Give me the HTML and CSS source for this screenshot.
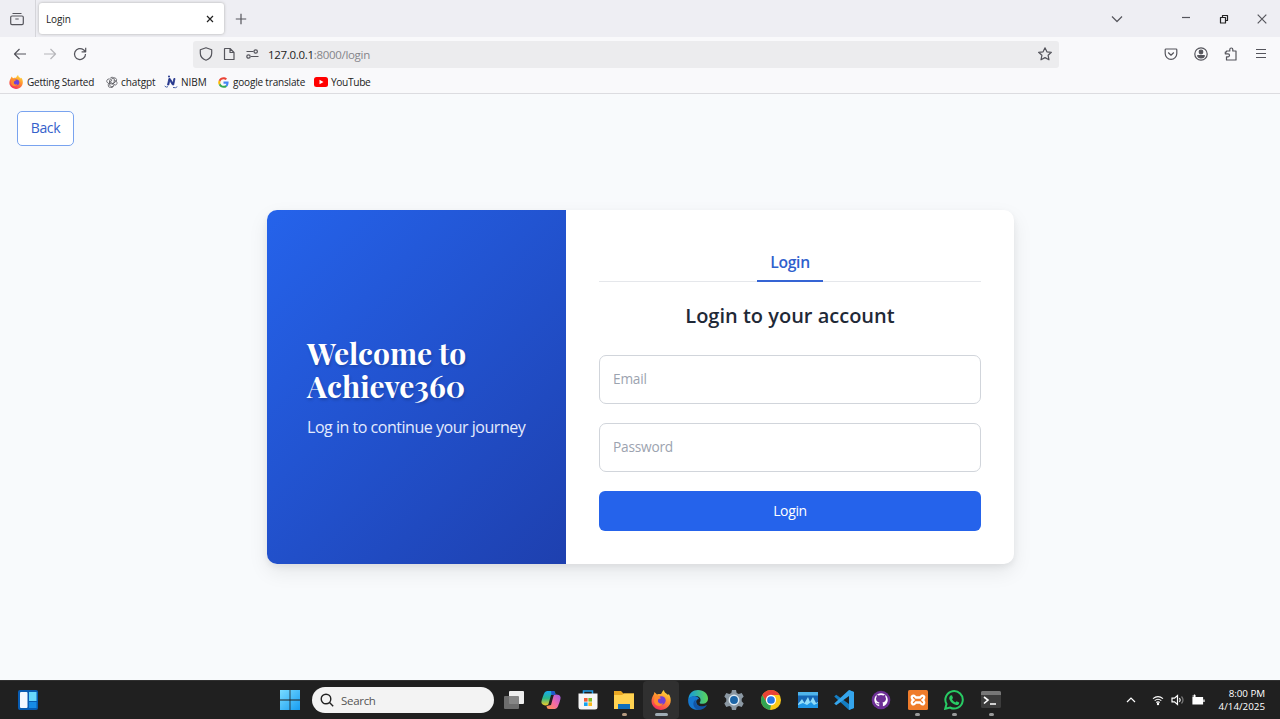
FILE: index.html
```html
<!DOCTYPE html>
<html lang="en">
<head>
<meta charset="utf-8">
<title>Login</title>
<link rel="stylesheet" href="styles.css">
</head>
<body>
<div class="tabs">
  <div class="firefox-view"><svg width="16" height="16" viewBox="0 0 16 16" class="line"><path d="M3.500 2.500h9M3 5h10a1.300 1.300 0 0 1 1.300 1.300v6a1.300 1.300 0 0 1-1.300 1.300H3a1.300 1.300 0 0 1-1.300-1.300v-6A1.300 1.300 0 0 1 3 5zM6.300 8h3.400"/></svg></div>
  <div class="tab"><span class="tab-title">Login</span><svg width="10" height="10" viewBox="0 0 10 10" class="line dark"><path d="M2 2l6 6m0-6l-6 6"/></svg></div>
  <svg class="line plus" width="12" height="12" viewBox="0 0 12 12"><path d="M6 .8v10.400M.8 6h10.400"/></svg>
  <svg class="line chevron" width="12" height="12" viewBox="0 0 12 12"><path d="M1 3.500l5 5 5-5"/></svg>
  <svg class="line minimize" width="10" height="10" viewBox="0 0 10 10"><path d="M1 3.500h8"/></svg>
  <svg class="line dark restore" width="10" height="10" viewBox="0 0 10 10"><path d="M1.500 3.500h5V9h-5zM3.500 3V1.500h5v5H7"/></svg>
  <svg class="line close" width="10" height="10" viewBox="0 0 10 10"><path d="M.7.7l8.600 8.600m0-8.600L.7 9.300"/></svg>
</div>
<div class="toolbar">
  <svg class="line back-arrow" width="14" height="14" viewBox="0 0 14 14"><path d="M13 7H1.500M6.500 2l-5 5 5 5"/></svg>
  <svg class="line forward-arrow" width="14" height="14" viewBox="0 0 14 14"><path d="M1 7h11.500M7.500 2l5 5-5 5"/></svg>
  <svg class="line reload" width="14" height="14" viewBox="0 0 14 14"><path d="M12.500 7A5.500 5.500 0 1 1 10.500 2.800l1.700 1.500M12.700.8v4H8.600"/></svg>
  <div class="address">
    <svg class="line" width="14" height="14" viewBox="0 0 14 14"><path d="M7 .8l5.700 2v3.400C12.700 9.500 10.300 12 7 13.200 3.700 12 1.300 9.500 1.300 6.200V2.800z"/></svg>
    <svg class="line page" width="12" height="14" viewBox="0 0 12 14"><path d="M2 1.500h5l4 4v7H1.500V2zM7 1.500v4h4"/></svg>
    <svg class="line" width="13" height="10" viewBox="0 0 13 10"><path d="M.5 2.500h7M5 7.500h7.500"/><circle cx="9.700" cy="2.500" r="1.700"/><circle cx="2.500" cy="7.500" r="1.700"/></svg>
    <span class="url"><b>127.0.0.1</b>:8000/login</span>
    <svg class="line star" width="14" height="14" viewBox="0 0 14 14"><path d="M7 .8l1.900 4 4.500.5-3.300 3 .9 4.500L7 10.600l-4 2.200.9-4.500-3.300-3 4.500-.5z"/></svg>
  </div>
  <div class="tools">
    <svg class="line" width="14" height="14" viewBox="0 0 14 14"><path d="M2 2h10a.8.8 0 0 1 .8.8v3.700a5.800 5.800 0 0 1-11.600 0V2.800A.8.8 0 0 1 2 2zM4.200 5.500L7 8.200l2.800-2.700"/></svg>
    <svg class="line" width="14" height="14" viewBox="0 0 14 14"><circle cx="7" cy="7" r="6.200"/><circle cx="7" cy="5" r="1.800" class="solid"/><path class="solid" d="M3.700 8.500h6.600c0 3.200-6.600 3.200-6.600 0z"/></svg>
    <svg class="line" width="14" height="14" viewBox="0 0 14 14"><path d="M2.500 5V4h3.300V2.500a1.500 1.500 0 0 1 3 0V4H12v9H2.500V9.800H4a1.500 1.500 0 0 0 0-3H1.300V5z"/></svg>
    <svg class="line" width="14" height="14" viewBox="0 0 14 14"><path d="M2 2.500h10M2 6.500h10M2 10.500h10"/></svg>
  </div>
</div>
<div class="bookmarks">
  <svg width="14" height="14" viewBox="0 0 20 20"><use href="#firefox"/></svg><span class="bm started">Getting Started</span>
  <svg width="12" height="12" viewBox="0 0 12 12" class="line knot"><path d="M4 2.700a2.200 2.200 0 0 1 4.200.2v4L6 8.200 3.700 6.900V4.200L7 2.300a2.200 2.200 0 0 1 3.300 2.800L6 8.200M8.200 4l2 1.200a2.200 2.200 0 0 1-1 3.900L5 6.500M8 9.200a2.200 2.200 0 0 1-4.200 0V5M7.500 9.400a2.200 2.200 0 0 1-5.300-.8L6 4M3.700 8L1.800 7A2.200 2.200 0 0 1 3.500 3"/></svg><span class="bm chatgpt">chatgpt</span>
  <svg width="14" height="14" viewBox="0 0 14 14"><path d="M3.500 10l1.400-6.500h1.200l2.800 4.500L9.900 3.500H11L9.700 10H8.500L5.700 5.600 4.800 10z" fill="#23358c" stroke="#23358c" stroke-width=".8"/><path d="M.7 11q1.500 2 3.300.6M9 12.500q3 .8 4.300-.8" fill="none" stroke="#4861a8"/><circle cx="5" cy="1.500" r="1" fill="#23358c"/></svg><span class="bm nibm">NIBM</span>
  <svg width="11" height="11" viewBox="0 0 24 24" class="g-logo"><path fill="#4285f4" d="M23 10H12v4.500h6.300a5.500 5.500 0 0 1-2.300 3.700l3.700 2.800C22 18.900 23.600 15 23 10z"/><path fill="#34a853" d="M19.700 21C13.800 26 4.500 23.700 1.700 17l3.700-2.900c1.600 4.900 6.700 6.600 10.600 4.100z"/><path fill="#fbbc05" d="M1.700 17a11.300 11.300 0 0 1 0-10l3.700 2.900a7 7 0 0 0 0 4.200z"/><path fill="#ea4335" d="M1.700 7C5-.2 14-2 19.700 3.600l-3.200 3.200C12.700 3.400 7 5 5.400 9.900z"/></svg><span class="bm translate">google translate</span>
  <svg width="14" height="10" viewBox="0 0 14 10"><rect width="14" height="10" rx="2.500" fill="#f00"/><path d="M5.500 2.700v4.600l4-2.300z" fill="#fff"/></svg><span class="bm youtube">YouTube</span>
</div>
<main class="page-body">
  <a class="back">Back</a>
  <section class="card">
    <div class="hero">
      <h1>Welcome to<br>Achieve360</h1>
      <p>Log in to continue your journey</p>
    </div>
    <form class="panel">
      <div class="switcher"><span class="active">Login</span></div>
      <h2>Login to your account</h2>
      <div class="field email">Email</div>
      <div class="field password">Password</div>
      <div class="submit">Login</div>
    </form>
  </section>
</main>
<footer class="taskbar">
  <svg class="widgets" width="20" height="20" viewBox="0 0 20 20"><rect width="20" height="20" rx="2" fill="#075bb1"/><rect x="2" y="2" width="7.500" height="16" rx="1" fill="#f2f8ff"/><rect x="11" y="2" width="7.500" height="9" fill="#67d7fb"/><rect x="11" y="12" width="7.500" height="6" fill="#168be6"/></svg>
  <svg class="start" width="20" height="20" viewBox="0 0 20 20"><defs><linearGradient id="win" x1="0" y1="0" x2="1" y2="1"><stop stop-color="#79dcff"/><stop offset="1" stop-color="#169cf1"/></linearGradient></defs><path fill="url(#win)" d="M0 0h9.600v9.600H0zM10.400 0H20v9.600h-9.600zM0 10.400h9.600V20H0zM10.400 10.400H20V20h-9.600z"/></svg>
  <div class="search"><svg width="14" height="14" viewBox="0 0 14 14"><circle cx="6" cy="6" r="4.800"/><path d="M9.500 9.500l3.700 3.700"/></svg><span>Search</span></div>
  <div class="apps">
    <div class="app"><svg width="20" height="20" viewBox="0 0 20 20"><rect x="5" y="1" width="15" height="13" rx="1" fill="#eee"/><rect y="6" width="15" height="13" rx="1" fill="#777" opacity=".88"/></svg></div>
    <div class="app"><svg width="20" height="20" viewBox="0 0 20 20"><defs><linearGradient id="coa" x1="0" y1="0" x2="0" y2="1"><stop stop-color="#19a9ef"/><stop offset=".5" stop-color="#28b78b"/><stop offset="1" stop-color="#f4cc26"/></linearGradient><linearGradient id="cob" x1="1" y1="0" x2="0" y2="1"><stop stop-color="#9e59e8"/><stop offset=".5" stop-color="#f36aa7"/><stop offset="1" stop-color="#ff9745"/></linearGradient></defs><path fill="url(#coa)" d="M6 1h6c2 0 2 1 2.500 3L10 5 7.500 14c-.5 2-6 2-7-1C0 11 3 3 4 2z"/><path fill="url(#cob)" d="M14 19H8c-2 0-2-1-2.500-3L10 15l2.500-9c.5-2 6-2 7 1 .5 2-2.500 10-3.500 11z"/><path d="M10 1h3q1 1 1.500 4h-4z" fill="#2156cb"/></svg></div>
    <div class="app"><svg width="20" height="20" viewBox="0 0 20 20"><path d="M5.500 5V1h9v4" fill="none" stroke="#229ee8" stroke-width="1.500"/><path d="M.5 3.500h19V17a2.500 2.500 0 0 1-2.500 2.500H3A2.500 2.500 0 0 1 .5 17z" fill="#f6f6f6"/><path d="M6 8h3.600v3.600H6z" fill="#f15a35"/><path d="M10.400 8H14v3.600h-3.600z" fill="#7eb928"/><path d="M6 12.400h3.600V16H6z" fill="#15a3ee"/><path d="M10.400 12.400H14V16h-3.600z" fill="#fbb91b"/></svg></div>
    <div class="app"><svg width="22" height="20" viewBox="0 0 22 20"><path d="M1 1h7l2.500 2.500H21V19H1z" fill="#e9a723"/><path d="M1 5h8l2-1.500h10V19H1z" fill="#ffd251"/><path d="M5 14h12v5H5z" fill="#0d6fbd"/></svg><i class="dot warm"></i></div>
    <div class="app current"><svg width="20" height="20" viewBox="0 0 20 20"><defs><linearGradient id="fox" x1=".8" y1="0" x2=".3" y2="1"><stop stop-color="#ffe33b"/><stop offset=".45" stop-color="#ff9330"/><stop offset="1" stop-color="#f52b5d"/></linearGradient></defs><g id="firefox"><path fill="url(#fox)" d="M3 4l.4-2L6 4.500C8 3.700 9 4 10 4c1-1.500 1.500-3 3-4 0 3 3 3.500 4 5l.8-1c2 3 2.700 7 1 10.500C15 22 4 21.500 1 14-.2 10.500 1 7 3 4z"/><circle cx="10.500" cy="10.500" r="4.200" fill="#7140d6"/><path fill="#ff8b2f" d="M3.500 6.500C6 4.500 8 6 10 8.300L7.500 9C5.500 12 9 15 12 13c-2 5-9 3-9-2z"/></g></svg><i class="dot wide"></i></div>
    <div class="app"><svg width="20" height="20" viewBox="0 0 20 20"><defs><linearGradient id="edge" x1="0" y1="0" x2="1" y2="0"><stop stop-color="#1599df"/><stop offset="1" stop-color="#5bd657"/></linearGradient></defs><path fill="url(#edge)" d="M.3 9C1 3 5 0 10 0c6 0 10 4 10 8.500 0 4-3 5.500-6.500 5.300-2.300 0-2-1.200-1.200-2.300C14 7 8 3 .3 9z"/><path fill="#1677cf" d="M.2 9C3 5 10 5 11 9c-4 0-4 6 2 8l3 .5C10 22-.8 20 .2 9z"/><path fill="#1254a4" d="M8 9.500c-2 5 4 9 11 5.500-2 4-7 6-11 4-4-3-3-8 0-9.500z"/></svg></div>
    <div class="app"><svg width="20" height="20" viewBox="0 0 20 20"><path fill="#8b98a3" d="M8 0h4l.7 3 2 1 3-1 2 3.500-2 2.200v2.600l2 2.200-2 3.500-3-1-2 1-.7 3H8l-.7-3-2-1-3 1-2-3.500 2-2.200V8.700l-2-2.200L2.300 3l3 1 2-1z"/><circle cx="10" cy="10" r="4.700" fill="#1b65a7" stroke="#ddeaf3" stroke-width="1.500"/></svg></div>
    <div class="app"><svg width="20" height="20" viewBox="0 0 20 20"><circle cx="10" cy="10" r="10" fill="#fbc817"/><path fill="#e94335" d="M1.300 5C5-1.700 15-1.700 18.700 5H10v5l-4.300 2.500z"/><path fill="#31a451" d="M1.300 5l4.400 7.500L10 15l-1 5C1 19-2 11 1.300 5z"/><circle cx="10" cy="10" r="4.500" fill="#2878e5" stroke="#fff" stroke-width="1.300"/></svg></div>
    <div class="app"><svg width="20" height="16" viewBox="0 0 20 16"><rect width="20" height="16" fill="#1566b4"/><path d="M0 0h20v3.500H0z" fill="#4fb4ea"/><path d="M0 12l4-5 2.500 4L10 5l2 5 3-5 3 6 2-1v6H0z" fill="#8fdcfa"/><path d="M0 13l5-2 4 2 4-3 3 3 4-2v5H0z" fill="#1e96e6"/></svg></div>
    <div class="app"><svg width="20" height="20" viewBox="0 0 20 20"><path fill="#147dc2" d="M15 0l5 2v16l-5 2L.2 6.500l2-1.800L15 14z"/><path fill="#35a5ec" d="M15 0l5 2v16l-5 2V6L2.200 15.300l-2-1.800z"/></svg></div>
    <div class="app"><svg width="20" height="20" viewBox="0 0 20 20"><circle cx="10" cy="10" r="9.300" fill="#6c2f95"/><path fill="#fff" d="M8.200 16.300v-2c-2 .4-2.600-.8-3.200-1.600 1.500-.2 1.800 1.200 3.200.7l.3-1C6 12 5 10.500 5 8.500L5.700 6.500 5.600 4.500l2 .9q2.400-.6 4.800 0l2-.9-.1 2L15 8.500c0 2-1 3.500-3.500 3.900l.4 1.100v2.800A6.700 6.700 0 1 0 8.200 16.300z"/></svg></div>
    <div class="app"><svg width="20" height="20" viewBox="0 0 20 20"><rect width="20" height="20" rx="1.500" fill="#ef7c2b"/><path d="M7 6.500c-2-2-4 0-3 2l1.500 1.500L4 11.500c-1 2 1 4 3 2l1-1h4l1 1c2 2 4 0 3-2L14.500 10 16 8.500c1-2-1-4-3-2l-1 1H8z" fill="none" stroke="#fff" stroke-width="2.300"/></svg><i class="dot"></i></div>
    <div class="app"><svg width="20" height="20" viewBox="0 0 20 20"><path d="M1.200 18.800l1.300-4.700A8.700 8.700 0 1 1 6 17.500z" fill="none" stroke="#28cb64" stroke-width="2"/><path d="M6.500 5.500l1.500-.2 1 2.700-1 1.200c1 1.700 1.800 2.400 3.500 3.200l1-1.200 2.700 1.200c0 2-1.500 2.700-3 2.500-3.500-.6-6.700-4-7-6.700q0-1.700 1.300-2.700z" fill="#28cb64"/></svg><i class="dot"></i></div>
    <div class="app"><svg width="20" height="18" viewBox="0 0 20 18"><rect width="20" height="17" rx="1.500" fill="#3c3c3c"/><path d="M0 1.500A1.500 1.500 0 0 1 1.500 0h17A1.500 1.500 0 0 1 20 1.500V4H0z" fill="#777"/><path d="M3 6l4 3-4 3.500M9 13h6" fill="none" stroke="#fff" stroke-width="1.600"/></svg><i class="dot"></i></div>
  </div>
  <div class="tray">
    <svg width="10" height="10" viewBox="0 0 10 10"><path d="M1 7l4-4 4 4"/></svg>
    <svg class="wifi" width="12" height="12" viewBox="0 0 12 12"><path d="M1 4.600q5-4 10 0M2.700 6.600q3.300-2.700 6.600 0M4.300 8.600q1.700-1.300 3.400 0"/><circle cx="6" cy="10" r=".6"/></svg>
    <svg class="volume" width="14" height="12" viewBox="0 0 14 12"><path d="M1 4.200h2.500L6.500 1.500v9L3.500 7.800H1zM8.500 4q1.500 2 0 4"/><path opacity=".4" d="M10.500 2.500q3 3.500 0 7"/></svg>
    <svg width="14" height="12" viewBox="0 0 14 12"><path fill="#fff" d="M2 3.500h9.500v6.500H2zM13 5.500v2.500M3.500 4V.5M1.500 2H5"/></svg>
  </div>
  <div class="clock"><span class="time">8:00 PM</span><span class="date">4/14/2025</span></div>
</footer>
</body>
</html>
```

FILE: styles.css
```css
* { box-sizing: border-box; }
body { margin: 0; width: 1280px; height: 719px; overflow: hidden; display: flex; flex-direction: column; font-family: "Open Sans", "Noto Sans", sans-serif; }
svg { display: block; flex: none; }
.line { fill: none; stroke: #55555c; stroke-width: 1.2; stroke-linejoin: round; }
.line.dark { stroke: #222; }
.solid { fill: #55555c; }
.tabs { height: 37px; flex: none; background: #eeeef3; display: flex; align-items: center; padding-right: 13px; }
.firefox-view { width: 36px; height: 37px; border-right: 1px solid #d5d5da; display: flex; align-items: center; padding-left: 9px; }
.tab { margin-left: 3px; width: 185px; height: 31px; background: #fff; border-radius: 3px; box-shadow: 0 0 3px #aaa; display: flex; align-items: center; justify-content: space-between; padding: 0 9px 0 7px; }
.tab-title { font-size: 10px; color: #222; letter-spacing: -.1px; }
.plus { margin-left: 11px; }
.chevron { margin-left: auto; }
.minimize { margin-left: 58px; }
.restore { margin-left: 28px; }
.close { margin-left: 28px; }
.toolbar { height: 34px; flex: none; background: #f9f9fb; display: flex; align-items: center; padding-left: 13px; }
.forward-arrow { margin-left: 16px; opacity: .4; }
.reload { margin-left: 16px; }
.address { margin-left: 106px; width: 866px; height: 27px; background: #ececee; border-radius: 3px; display: flex; align-items: center; padding: 0 7px 0 6px; gap: 10px; }
.address .page { margin-right: 1px; }
.url { font-size: 11.500px; color: #85858a; letter-spacing: -.31px; margin-left: -1px; padding-top: 1px; }
.url b { font-weight: 400; color: #222; }
.star { margin-left: auto; }
.tools { display: flex; gap: 16px; margin-left: 105px; }
.bookmarks { height: 23px; flex: none; background: #f9f9fb; border-bottom: 1px solid #dcdce0; display: flex; align-items: center; padding-left: 9px; }
.bm { font-size: 10px; color: #222; white-space: nowrap; margin-left: 3px; }
.started { width: 79px; margin-left: 4px; letter-spacing: -.24px; }
.chatgpt { width: 43px; letter-spacing: -.1px; }
.nibm { width: 37px; margin-left: 3px; }
.translate { width: 81px; margin-left: 4px; letter-spacing: -.18px; }
.youtube { letter-spacing: -.35px; font-size: 10.200px; }
.knot { stroke-width: .8; }
.page-body { flex: 1; background: #f8fafc; padding: 16.500px 0 0 17px; }
.back { width: 57px; height: 35px; border: 1px solid #79a3ef; border-radius: 5px; background: #fff; color: #3561cb; font-size: 14px; letter-spacing: -.35px; display: flex; align-items: center; justify-content: center; padding-bottom: 1px; }
.card { margin: 64px 0 0 250px; width: 747px; height: 354.500px; border-radius: 10px; background: #fff; box-shadow: 0 8px 20px rgba(0, 0, 0, .08), 0 3px 6px rgba(0, 0, 0, .06); display: flex; overflow: hidden; }
.hero { width: 299px; background: linear-gradient(135deg, #2563eb, #1e40af); color: #fff; padding: 127px 0 0 40px; }
h1 { margin: 0; font: bold 30px/33px "Playfair Display", "Liberation Serif", serif; text-shadow: 1px 2px 3px rgba(0, 0, 0, .2); white-space: nowrap; }
.hero p { margin: 13px 0 0; font-size: 16px; letter-spacing: -.47px; line-height: 22px; color: #e4ebfd; white-space: nowrap; }
.panel { flex: 1; padding: 33px 33px 0; }
.switcher { height: 39px; border-bottom: 1px solid #e5e7eb; display: flex; justify-content: center; }
.active { width: 66px; height: 39px; border-bottom: 2px solid #3564d4; color: #2f60cd; font-size: 15.700px; letter-spacing: -.3px; font-weight: 550; line-height: 38px; text-align: center; }
h2 { margin: 20px 0 26px; font-size: 20px; font-weight: 600; line-height: 27px; text-align: center; color: #1f2937; white-space: nowrap; }
.field { height: 49px; border: 1px solid #d1d5db; border-radius: 7px; margin-bottom: 19px; padding-left: 13px; font-size: 13.700px; letter-spacing: -.22px; line-height: 45px; color: #9ca3af; }
.submit { height: 40px; border-radius: 6px; background: #2563eb; color: #fff; font-size: 14px; letter-spacing: -.35px; line-height: 40px; text-align: center; }
.taskbar { height: 39px; flex: none; background: #202020; border-top: 1px solid #303030; display: flex; align-items: center; padding: 0 15px 0 18px; }
.start { margin-left: 242px; }
.search { margin-left: 12px; width: 182px; height: 26px; border-radius: 13px; background: #f3f3f3; color: #555; display: flex; align-items: center; padding-left: 8px; font-size: 11.500px; letter-spacing: -.3px; gap: 7px; }
.search svg { fill: none; stroke: #222; stroke-width: 1.400; }
.apps { display: flex; margin-left: 2px; }
.app { width: 36.670px; height: 38px; display: flex; align-items: center; justify-content: center; position: relative; border-radius: 4px; }
.current { background: #303030; }
.dot { position: absolute; bottom: 3px; left: 16px; width: 5px; height: 3px; border-radius: 2px; background: #999; }
.dot.wide { width: 13px; left: 12px; background: #a0acb4; }
.dot.warm { background: #b59a80; }
.tray { display: flex; align-items: center; margin-left: auto; fill: none; stroke: #fff; stroke-width: 1.200; }
.wifi { margin-left: 16px; }
.volume { margin: 0 6px 0 7px; }
.clock { width: 53px; margin-left: 7px; color: #fff; font-size: 9.800px; line-height: 13px; display: flex; flex-direction: column; align-items: flex-end; white-space: nowrap; padding-bottom: 1px; }
.time { letter-spacing: -.05px; }
```
